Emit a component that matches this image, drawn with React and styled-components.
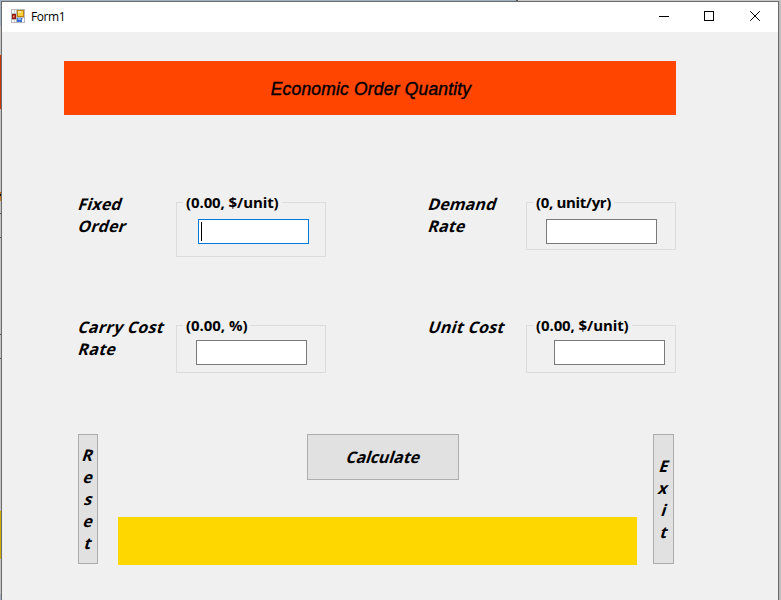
import React from "react";
import styled, { createGlobalStyle } from "styled-components";

const GlobalStyle = createGlobalStyle`
  * { box-sizing: border-box; }
  body { margin: 0; overflow: hidden; background: #c7c7c7; }
`;

const Desktop = styled.div`
  display: grid;
  grid-template-columns: 1px 778px 2px;
  grid-template-rows: 1px 599px;
  width: 781px;
  height: 600px;
  overflow: hidden;
`;

const TopEdge = styled.div`
  grid-column: 1 / -1;
  background: linear-gradient(90deg, #a3b1c2 0 516px, #555 516px 518px, #c9c9c9 518px);
`;

const LeftEdge = styled.div`
  background: linear-gradient(
    #a3b1c2 0 25px, #c3c3c3 25px 54px, #c93600 54px 108px, #c3c3c3 108px 191px,
    #b56b20 191px 193px, #111 193px 195px, #c87a28 195px 200px,
    #c3c3c3 200px 212px, #555 212px 213px, #c3c3c3 213px 236px, #555 236px 237px,
    #c3c3c3 237px 333px, #555 333px 334px, #c3c3c3 334px 357px, #555 357px 358px,
    #c3c3c3 358px 510px, #cfae00 510px 558px, #c3c3c3 558px 593px, #a3b1c2 593px
  );
`;

const RightEdge = styled.div`
  background: linear-gradient(90deg, #b5b5b5, #c3c3c3);
`;

const Window = styled.main`
  display: flex;
  flex-direction: column;
  border: 1px solid #6b6b6b;
  border-bottom: 0;
  background: #f0f0f0;
  color: #000;
`;

const TitleBar = styled.header`
  display: flex;
  align-items: center;
  height: 30px;
  padding-left: 9px;
  background: #fff;
`;

const AppIcon = styled.svg`
  width: 14px;
  height: 14px;
  flex: none;
  margin-right: 6px;
  margin-bottom: 2px;
`;

const WindowTitle = styled.h1`
  flex: 1;
  margin: 0;
  font: 400 12px/16px "Open Sans", "Noto Sans", sans-serif;
  letter-spacing: -0.4px;
`;

const Caption = styled.button`
  display: flex;
  justify-content: center;
  width: 46px;
  height: 30px;
  padding: 9px 0 0;
  border: 0;
  background: transparent;
`;

const CaptionGlyph = styled.svg`
  width: 10px;
  height: 10px;
  overflow: visible;
  fill: none;
  stroke: #000;
`;

const Form = styled.form`
  display: flex;
  flex-direction: column;
  padding: 29px 102px 0 62px;
`;

const Banner = styled.h2`
  display: flex;
  align-items: center;
  justify-content: center;
  height: 54px;
  margin: 0 0 78px;
  padding-top: 1px;
  padding-left: 2px;
  background: #ff4500;
  font: italic 400 17.5px/22px "Liberation Sans", Arial, sans-serif;
  letter-spacing: 0.18px;
  -webkit-text-stroke: 0.4px #000;
`;

const FieldGrid = styled.div`
  display: grid;
  grid-template-columns: 350px 262px;
  grid-template-rows: 123px 118px;
`;

const Field = styled.div`
  display: grid;
  grid-template-columns: 97px 150px;
  align-items: start;
  padding-left: 15px;
`;

const Label = styled.label`
  display: flex;
  flex-direction: column;
  align-items: flex-start;
`;

const Slanted = styled.span`
  display: block;
  font: 700 16px/22px "Open Sans", "Noto Sans", sans-serif;
  letter-spacing: ${(p) => p.$spacing ?? 0}px;
  white-space: nowrap;
  transform: skewX(-18deg);
`;

const GroupBox = styled.fieldset`
  min-width: 0;
  height: ${(p) => p.$height}px;
  margin: -1px 0 0;
  padding: 0 0 0 ${(p) => p.$inset}px;
  border: 1px solid #dcdcdc;
`;

const Legend = styled.legend`
  margin-left: ${(p) => 6 - p.$inset}px;
  padding: 0 3px;
  font: 700 15px/20px "Open Sans", "Noto Sans", sans-serif;
  letter-spacing: ${(p) => p.$spacing}px;
  white-space: nowrap;
`;

const Input = styled.div`
  display: flex;
  align-items: center;
  width: 111px;
  height: 25px;
  margin-top: ${(p) => p.$top}px;
  padding-left: 2px;
  border: 1px solid ${(p) => (p.$focused ? "#0078d7" : "#7a7a7a")};
  background: #fff;
`;

const Caret = styled.span`
  width: 1px;
  height: 19px;
  background: #000;
`;

const Actions = styled.div`
  display: grid;
  grid-template-columns: 40px 535px 21px;
  padding-left: 14px;
`;

const Center = styled.div`
  display: flex;
  flex-direction: column;
  gap: 37px;
`;

const Button = styled.button`
  display: flex;
  flex-direction: column;
  align-items: center;
  justify-content: center;
  width: ${(p) => p.$width}px;
  height: ${(p) => p.$height}px;
  margin: 0 0 0 ${(p) => p.$left || 0}px;
  padding: 0 0 0 1px;
  border: 1px solid #adadad;
  background: #e1e1e1;
  color: #000;
`;

const Result = styled.output`
  width: 519px;
  height: 48px;
  background: #ffd700;
`;

const fields = [
  { lines: ["Fixed", "Order"], unit: "(0.00, $/unit)", height: 65, inset: 21, focused: true, top: 7, spacing: -0.1, tracking: 0.15 },
  { lines: ["Demand", "Rate"], unit: "(0, unit/yr)", height: 58, inset: 19, top: 7, spacing: -0.35, tracking: 0.1 },
  { lines: ["Carry Cost", "Rate"], unit: "(0.00, %)", height: 58, inset: 19, top: 5, spacing: -0.05, tracking: 0.3 },
  { lines: ["Unit Cost"], unit: "(0.00, $/unit)", height: 58, inset: 27, top: 5, spacing: -0.1, tracking: 0.3 },
];

function FormIcon() {
  return (
    <AppIcon viewBox="0 0 14 14" shapeRendering="crispEdges">
      <rect width="14" height="14" fill="#b9b9b9" />
      <path d="M1 1h4v3H1zM6 10h7v3H6zM1 11h4v2H1z" fill="#fff" />
      <path d="M3 1h1v3H3zM3 11h1v2H3z" fill="#c7c7c7" />
      <rect x="1" y="5" width="4" height="5" fill="#8e1710" />
      <rect x="2" y="6" width="2" height="3" fill="#c84436" />
      <rect x="2" y="7" width="1" height="1" fill="#f6aaa0" />
      <rect x="6" y="1" width="7" height="7" fill="#bd850b" />
      <rect x="7" y="2" width="5" height="5" fill="#ffcf3d" />
      <rect x="7" y="2" width="3" height="2" fill="#ffe899" />
      <rect x="6" y="9" width="5" height="4" fill="#3b70d3" />
      <rect x="7" y="9" width="3" height="2" fill="#8ab6ff" />
      <path d="M12 9h1v4h-1z" fill="#fff" />
    </AppIcon>
  );
}

const glyphs = {
  Minimize: <path d="M1 5.5h10" />,
  Maximize: <path d="M.5.5h9v9h-9z" />,
  Close: <path d="M.2.2l9.6 9.6M9.8.2L.2 9.8" shapeRendering="auto" />,
};

export default function App() {
  return (
    <>
      <GlobalStyle />
      <Desktop>
        <TopEdge />
        <LeftEdge />
        <Window>
          <TitleBar>
            <FormIcon />
            <WindowTitle>Form1</WindowTitle>
            {Object.entries(glyphs).map(([name, glyph]) => (
              <Caption key={name} type="button" aria-label={name}>
                <CaptionGlyph viewBox="0 0 10 10" shapeRendering="crispEdges">
                  {glyph}
                </CaptionGlyph>
              </Caption>
            ))}
          </TitleBar>
          <Form>
            <Banner>Economic Order Quantity</Banner>
            <FieldGrid>
              {fields.map((f) => (
                <Field key={f.lines.join(" ")}>
                  <Label>
                    {f.lines.map((line) => (
                      <Slanted key={line} $spacing={f.tracking}>{line}</Slanted>
                    ))}
                  </Label>
                  <GroupBox $height={f.height} $inset={f.inset}>
                    <Legend $inset={f.inset} $spacing={f.spacing}>{f.unit}</Legend>
                    <Input $focused={f.focused} $top={f.top}>{f.focused && <Caret />}</Input>
                  </GroupBox>
                </Field>
              ))}
            </FieldGrid>
            <Actions>
              <Button type="button" $width={20} $height={130}>
                {[..."Reset"].map((c, i) => <Slanted key={i}>{c}</Slanted>)}
              </Button>
              <Center>
                <Button type="button" $width={152} $height={46} $left={189}>
                  <Slanted $spacing={-0.1}>Calculate</Slanted>
                </Button>
                <Result />
              </Center>
              <Button type="button" $width={21} $height={130}>
                {[..."Exit"].map((c, i) => <Slanted key={i}>{c}</Slanted>)}
              </Button>
            </Actions>
          </Form>
        </Window>
        <RightEdge />
      </Desktop>
    </>
  );
}
